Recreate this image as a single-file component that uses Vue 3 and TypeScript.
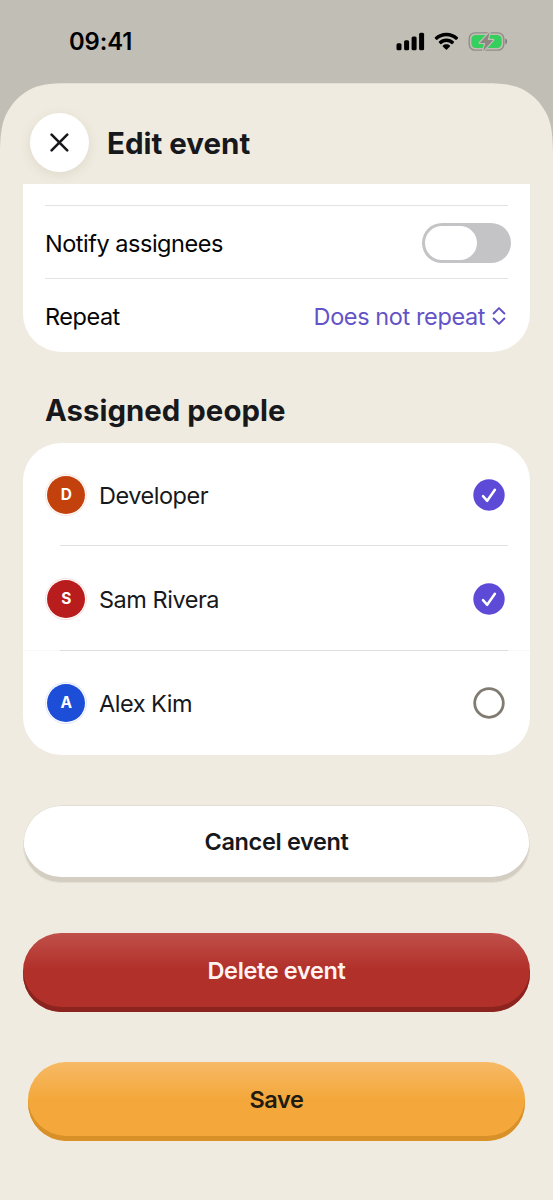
<script setup lang="ts">
import { ref } from 'vue'

interface Person {
  name: string
  tone: string
  assigned: boolean
}

const people = ref<Person[]>([
  { name: 'Developer', tone: 'orange', assigned: true },
  { name: 'Sam Rivera', tone: 'red', assigned: true },
  { name: 'Alex Kim', tone: 'blue', assigned: false },
])
const notify = ref(false)
</script>

<template>
  <div class="screen">
    <header class="status">
      <span class="time">09:41</span>
      <svg class="signals" width="114" height="24" viewBox="0 0 114 24">
        <rect x="0.5" y="13.3" width="5" height="6.9" rx="1.5" />
        <rect x="8.1" y="10.3" width="5" height="9.9" rx="1.5" />
        <rect x="15.6" y="6.5" width="5" height="13.7" rx="1.5" />
        <rect x="23.1" y="2.7" width="5" height="17.5" rx="1.5" />
        <path d="M50.400 2.800C54.900 2.800 58.900 4.500 61.900 7.300Q62.400 7.800 61.900 8.400L60.500 9.800Q60.000 10.300 59.500 9.800C57.100 7.600 53.900 6.300 50.400 6.300S43.700 7.600 41.300 9.800Q40.800 10.300 40.300 9.800L38.900 8.400Q38.400 7.800 38.900 7.300C41.900 4.500 45.900 2.800 50.400 2.800Z" />
        <path d="M50.400 8.600C53.400 8.600 55.900 9.700 57.900 11.500Q58.400 12 57.900 12.500L56.500 13.900Q56 14.400 55.400 13.900A7.600 7.600 0 0 0 45.400 13.900Q44.800 14.400 44.300 13.900L42.900 12.500Q42.400 12 42.900 11.500C44.900 9.700 47.400 8.600 50.400 8.600Z" />
        <path d="M50.400 14.300C51.800 14.300 53 14.800 53.900 15.500Q54.500 16 54 16.500L50.900 19.500Q50.400 20 49.900 19.500L46.800 16.500Q46.300 16 46.900 15.500C47.800 14.800 49 14.300 50.400 14.300Z" />
        <rect x="73.200" y="2.900" width="34.600" height="17.200" rx="5.800" fill="none" stroke="#8f8d87" stroke-width="1.4" />
        <path d="M109.300 8.600Q111 9.300 111 11.500T109.300 14.400Z" fill="#76746f" />
        <rect x="75.400" y="5" width="30.200" height="13" rx="4.200" fill="#34cf5c" />
        <path d="M93.700 2.200L83.800 12.900H89.300L87.200 21L97.200 10H91.700Z" fill="#8c8881" stroke="#c1beb5" stroke-width="2.400" paint-order="stroke" stroke-linejoin="round" />
      </svg>
    </header>

    <main class="sheet">
      <div class="titlebar">
        <button class="close" aria-label="Close">
          <svg width="20" height="20" viewBox="0 0 20 20"><path d="M1.600 1.700L17.200 17.300M17.200 1.700L1.600 17.300" /></svg>
        </button>
        <h1>Edit event</h1>
      </div>

      <section class="card options">
        <div class="option notify">
          <span>Notify assignees</span>
          <button class="switch" role="switch" :aria-checked="notify" @click="notify = !notify"><i></i></button>
        </div>
        <div class="option repeat">
          <span>Repeat</span>
          <span class="choice">
            <span class="value">Does not repeat</span>
            <svg width="14" height="20" viewBox="0 0 14 20"><path d="M1.600 7.500L7 2.100L12.400 7.500M1.600 12.500L7 17.900L12.400 12.500" /></svg>
          </span>
        </div>
      </section>

      <h2>Assigned people</h2>

      <section class="card people">
        <div v-for="person in people" :key="person.name" class="person" @click="person.assigned = !person.assigned">
          <span class="avatar" :class="person.tone">{{ person.name[0] }}</span>
          <span class="name">{{ person.name }}</span>
          <svg class="check" width="32" height="32" viewBox="0 0 32 32">
            <template v-if="person.assigned">
              <circle cx="16" cy="16" r="15.700" fill="#5d4bd7" />
              <path d="M10 17.200L14.200 21.800L21.900 10.700" fill="none" stroke="#fff" stroke-width="2.500" stroke-linecap="round" stroke-linejoin="round" />
            </template>
            <circle v-else cx="16" cy="16" r="14.300" fill="none" stroke="#827b72" stroke-width="2.800" />
          </svg>
        </div>
      </section>

      <div class="actions">
        <button class="action cancel"><span>Cancel event</span></button>
        <button class="action delete"><span>Delete event</span></button>
        <button class="action save"><span>Save</span></button>
      </div>
    </main>
  </div>
</template>

<style>
body {
  margin: 0;
  background: #c1beb5;
}
</style>

<style scoped>
.screen {
  width: 553px;
  height: 1200px;
  overflow: hidden;
  background: #c1beb5;
  color: #17181b;
  font-family: Inter, "Liberation Sans", sans-serif;
  font-size: 23.500px;
  letter-spacing: -0.480px;
}
button {
  padding: 0;
  border: 0;
  font: inherit;
  color: inherit;
}
.status {
  height: 83px;
  box-sizing: border-box;
  padding: 27px 43px 0 69px;
  display: flex;
  justify-content: space-between;
  color: #000;
}
.time {
  font-size: 23.800px;
  line-height: 30px;
  font-weight: 600;
  letter-spacing: -0.100px;
}
.signals {
  margin-top: 3px;
}
.sheet {
  height: 1117px;
  box-sizing: border-box;
  padding: 0 23px;
  background: #f0ebe0;
  clip-path: path("M0 1117V72C0 50 2 38 8 28C13 19 20 12 29 7C38 2 48 .3 68 .3H485C505 .3 515 2 524 7C533 12 540 19 545 28C551 38 553 50 553 72V1117Z");
}
.titlebar {
  height: 101px;
  box-sizing: border-box;
  padding: 30px 0 0 7px;
  display: flex;
  align-items: flex-start;
  gap: 18px;
}
.close {
  width: 59px;
  height: 59px;
  display: grid;
  place-items: center;
  border-radius: 50%;
  background: #fff;
  box-shadow: 0 3px 12px rgba(80, 65, 35, 0.100);
}
.close svg {
  fill: none;
  stroke: #17181b;
  stroke-width: 2.600;
  stroke-linecap: round;
}
h1,
h2 {
  margin: 0;
  font-weight: 700;
}
h1 {
  font-size: 29.500px;
  line-height: 60px;
  letter-spacing: 0;
}
.card {
  background: #fff;
}
.options {
  height: 168px;
  box-sizing: border-box;
  padding: 21px 22px 0;
  border-radius: 0 0 38px 38px;
  color: #050505;
}
.option {
  box-sizing: border-box;
  display: flex;
  align-items: center;
  justify-content: space-between;
  border-top: 1px solid #e3e3e4;
}
.notify {
  height: 73px;
  padding-top: 2px;
}
.repeat {
  height: 75px;
}
.switch {
  width: 89px;
  height: 40px;
  margin-right: -3px;
  padding: 3px;
  box-sizing: border-box;
  border-radius: 20px;
  background: #c4c4c7;
  display: flex;
}
.switch i {
  width: 52px;
  height: 34px;
  border-radius: 17px;
  background: #fff;
}
.choice {
  display: flex;
  align-items: center;
  gap: 7px;
  margin-right: 2px;
  color: #6353c7;
  letter-spacing: -0.400px;
}
.choice svg {
  fill: none;
  stroke: #6353c7;
  stroke-width: 2;
  stroke-linecap: round;
  stroke-linejoin: round;
}
h2 {
  padding-left: 22px;
  height: 91px;
  line-height: 118px;
  font-size: 29.300px;
  letter-spacing: 0.050px;
}
.people {
  height: 312px;
  border-radius: 38px;
}
.person {
  height: 104px;
  box-sizing: border-box;
  padding: 0 25px 0 24px;
  display: flex;
  align-items: center;
  background: linear-gradient(#e1e1e2, #e1e1e2) 37px 102px / 448px 1px no-repeat;
}
.person:nth-child(2) {
  background:
    linear-gradient(#dededf, #dededf) 37px 103px / 448px 1px no-repeat,
    linear-gradient(#f8f8f8, #f8f8f8) 0 103px / 100% 1px no-repeat;
}
.person:last-child {
  background: none;
}
.avatar {
  width: 38px;
  height: 38px;
  margin-bottom: 1px;
  border-radius: 50%;
  display: grid;
  place-items: center;
  color: #fff;
  font-size: 15.500px;
  font-weight: 700;
}
.orange {
  background: #c2410c;
  box-shadow: 0 0 0 1px #fff, 0 0 0 2px #f8e5dd;
}
.red {
  background: #b91c1c;
  box-shadow: 0 0 0 1px #fff, 0 0 0 2px #f6dfdf;
}
.blue {
  background: #1d4ed8;
  box-shadow: 0 0 0 1px #fff, 0 0 0 2px #dfe6fa;
}
.name {
  margin-left: 14px;
  flex: 1;
}
.actions {
  display: flex;
  flex-direction: column;
  padding-top: 50px;
}
.action {
  height: 79px;
  margin-bottom: 50px;
  padding-bottom: 5px;
  border-radius: 38px;
  font-weight: 600;
  letter-spacing: -0.350px;
  text-align: center;
}
.cancel {
  height: 78px;
  background: #fff;
  box-shadow: inset 0 0 0 1px #e4dfd5, inset 0 -6px 0 #d4cec2;
}
.delete {
  color: #fff3f1;
  background: linear-gradient(#c0504a, #b2302a 46%);
  box-shadow: inset 0 -5px 0 #8b241f;
}
.save {
  margin: 0 5px;
  color: #211a10;
  background: linear-gradient(#f7ba66, #f4a83c 46%);
  box-shadow: inset 0 -5px 0 #d89129;
}
</style>
